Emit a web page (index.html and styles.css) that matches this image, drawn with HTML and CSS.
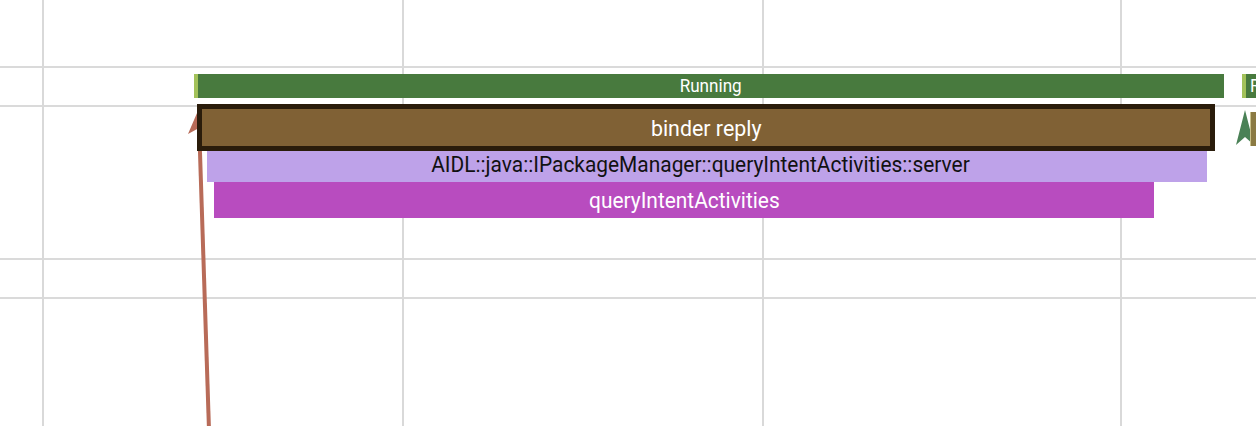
FILE: index.html
```html
<!DOCTYPE html>
<html>
<head>
<meta charset="utf-8">
<link rel="stylesheet" href="styles.css">
</head>
<body>
<div class="timeline">
  <div class="track t-top"></div>
  <div class="track t-state"></div>
  <div class="track t-slices"></div>
  <div class="track t-empty"></div>
  <div class="track t-bottom"></div>

  <div class="gridlines">
    <div class="vline" style="left:42px"></div>
    <div class="vline" style="left:402px"></div>
    <div class="vline" style="left:762px"></div>
    <div class="vline" style="left:1120px"></div>
  </div>

  <div class="state running" style="left:194px;width:1030px"><span class="lbl">Running</span></div>
  <div class="state running clip" style="left:1242px;width:80px"><span class="lbl">Running</span></div>

  <svg class="flows" width="1256" height="426" viewBox="0 0 1256 426">
    <line x1="209" y1="430" x2="199" y2="122" class="flow-line"/>
    <polygon points="200,106 188,134 199,128 211,133" class="flow-head"/>
    <polygon points="1245,110 1236,145 1245,137 1254,145" class="flow-green"/>
    <rect x="1251" y="112" width="5" height="34" class="olive"/>
    <rect x="1250" y="112" width="1" height="34" class="olive-edge"/>
  </svg>

  <div class="slice aidl" style="left:207px;top:146px;width:1000px"><span class="lbl">AIDL::java::IPackageManager::queryIntentActivities::server</span></div>
  <div class="slice query" style="left:214px;top:182px;width:940px"><span class="lbl">queryIntentActivities</span></div>
  <div class="slice binder" style="left:197px;top:104px;width:1018px"><span class="lbl">binder reply</span></div>
</div>
</body>
</html>
```

FILE: styles.css
```css
html, body {
  margin: 0;
  padding: 0;
  background: #ffffff;
}
body {
  width: 1256px;
  height: 426px;
  overflow: hidden;
  font-family: Roboto, "Noto Sans", sans-serif;
}
.timeline {
  position: relative;
  width: 1256px;
  height: 426px;
  display: flex;
  flex-direction: column;
  overflow: hidden;
}
.track {
  flex: none;
  border-bottom: 2px solid #dadada;
}
.t-top { height: 66px; }
.t-state { height: 37px; }
.t-slices { height: 151px; }
.t-empty { height: 37px; }
.t-bottom { flex: 1; border-bottom: none; }

.gridlines {
  position: absolute;
  inset: 0;
}
.vline {
  position: absolute;
  top: 0;
  bottom: 0;
  width: 2px;
  background: #d9d9d9;
}

.state {
  position: absolute;
  top: 74px;
  height: 24px;
  box-sizing: border-box;
  background: #487a3e;
  border-left: 4px solid #a3c25a;
  color: #ffffff;
  display: flex;
  align-items: center;
  justify-content: center;
  overflow: hidden;
  font-size: 18px;
  padding-bottom: 1px;
}
.state.clip {
  justify-content: flex-start;
  padding-left: 4px;
}
.lbl {
  display: inline-block;
  white-space: nowrap;
  transform: scaleX(0.95);
}
.state.clip .lbl {
  transform-origin: left center;
}

.flows {
  position: absolute;
  left: 0;
  top: 0;
}
.flow-line {
  stroke: #b86b58;
  stroke-width: 4;
}
.flow-head { fill: #b86b58; }
.flow-green { fill: #4a8156; }
.olive { fill: #8b7a43; }
.olive-edge { fill: #c9c08a; }

.slice {
  position: absolute;
  height: 36px;
  box-sizing: border-box;
  display: flex;
  align-items: center;
  justify-content: center;
  overflow: hidden;
  font-size: 22px;
}
.aidl {
  background: #bea2e9;
  color: #111111;
  padding-top: 1px;
  padding-right: 14px;
}
.query {
  background: #b84cbf;
  color: #ffffff;
}
.binder {
  height: 47px;
  background: #806135;
  border: 5px solid #2a1c0b;
  color: #ffffff;
  font-size: 22.5px;
}
```
